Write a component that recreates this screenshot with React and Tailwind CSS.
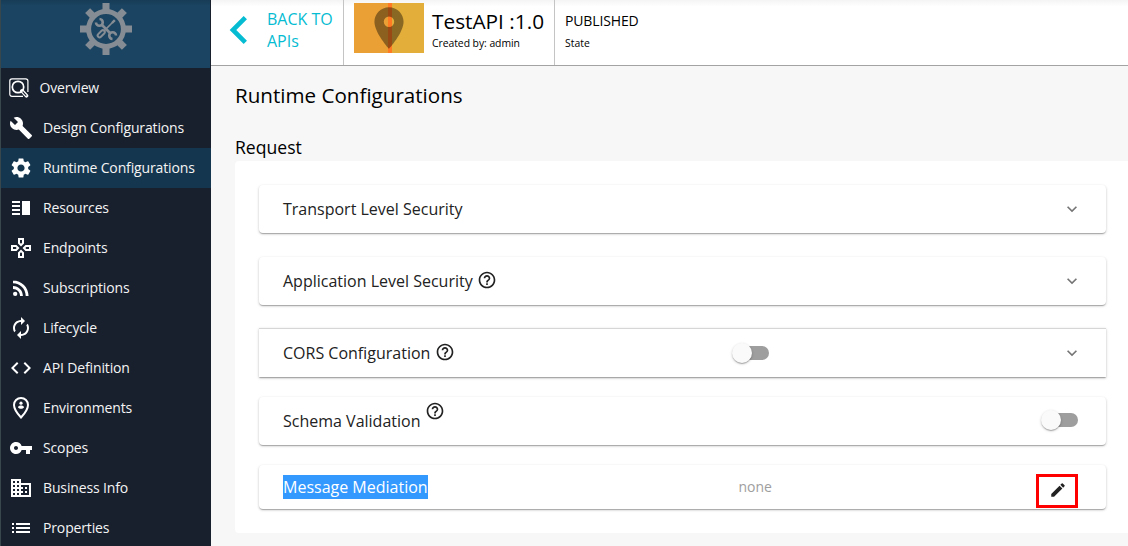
import React from "react";
import {
  MdBuild,
  MdSettings,
  MdVerticalSplit,
  MdOutlineGames,
  MdRssFeed,
  MdAutorenew,
  MdCode,
  MdVpnKey,
  MdBusiness,
  MdList,
  MdEdit,
  MdHelpOutline,
  MdExpandMore,
  MdKeyboardArrowLeft,
  MdPlace,
} from "react-icons/md";

const items = [
  { label: "Design Configurations", Icon: MdBuild },
  { label: "Runtime Configurations", Icon: MdSettings, active: true },
  { label: "Resources", Icon: MdVerticalSplit },
  { label: "Endpoints", Icon: MdOutlineGames },
  { label: "Subscriptions", Icon: MdRssFeed },
  { label: "Lifecycle", Icon: MdAutorenew },
  { label: "API Definition", Icon: MdCode },
  { label: "Environments", Icon: PersonPin },
  { label: "Scopes", Icon: MdVpnKey },
  { label: "Business Info", Icon: MdBusiness },
  { label: "Properties", Icon: MdList },
];

function PersonPin({ className }) {
  return (
    <svg viewBox="0 0 24 24" className={className} fill="currentColor">
      <path
        d="M12 2C8.100 2 5 5.100 5 8.900 5 12.500 8.500 17.700 12 21.500c3.500-3.800 7-9 7-12.600C19 5.100 15.900 2 12 2z"
        fill="none"
        stroke="currentColor"
        strokeWidth="2"
      />
      <circle cx="12" cy="7.200" r="1.600" />
      <path d="M9 11.400c0-1.300 1.700-1.900 3-1.900s3 .6 3 1.900c-.7.900-1.800 1.300-3 1.300s-2.300-.4-3-1.300z" />
    </svg>
  );
}

function GearLogo() {
  return (
    <svg width="52" height="52" viewBox="0 0 52 52" className="text-[#858c94]">
      <g fill="currentColor">
        {[0, 45, 90, 135].map((a) => (
          <g key={a} transform={`rotate(${a} 26 26)`}>
            <rect x="22.5" y="0" width="7" height="9" />
            <rect x="22.5" y="43" width="7" height="9" />
          </g>
        ))}
      </g>
      <circle cx="26" cy="26" r="17.4" fill="none" stroke="currentColor" strokeWidth="5" />
      <g transform="rotate(-45 26 26)" fill="none" stroke="currentColor">
        <path d="M26 20v12" strokeWidth="2.6" />
        <path d="M23.500 14.300a3.400 3.400 0 1 0 5 0M23.500 37.700a3.400 3.400 0 1 1 5 0" strokeWidth="2.600" />
      </g>
      <g transform="rotate(45 26 26)" stroke="currentColor">
        <path d="M26 14v14" strokeWidth="1.6" />
        <path d="M26 13.500v4" strokeWidth="2.400" />
        <rect x="24.100" y="28.500" width="3.800" height="8.500" rx="1.900" fill="none" strokeWidth="2" />
      </g>
    </svg>
  );
}

function OverviewIcon() {
  return (
    <svg width="20" height="20" viewBox="0 0 20 20" fill="none" stroke="#fff">
      <path d="M14 18.400H3A2.200 2.200 0 0 1 .8 16.200V3A2.200 2.200 0 0 1 3 .8h13.700a2.200 2.200 0 0 1 2.200 2.200V14" strokeWidth="1.200" />
      <circle cx="9" cy="9" r="5.700" strokeWidth="1.700" />
      <path d="M12.900 12.800l4.600 5" strokeWidth="3.600" strokeLinecap="round" />
      <path d="M13.600 13.600l3.700 4" stroke="#18202e" strokeWidth="1.200" />
    </svg>
  );
}

function Card({ className, children }) {
  return (
    <div
      className={`flex items-center bg-white pl-6 shadow-[0_1px_3px_rgba(0,0,0,0.2),0_1px_1px_rgba(0,0,0,0.14),0_2px_1px_-1px_rgba(0,0,0,0.12)] ${className}`}
    >
      {children}
    </div>
  );
}

function Toggle() {
  return (
    <span className="flex h-[14px] w-[34px] items-center rounded-full bg-[#9e9e9e]">
      <span className="-ml-[3px] size-5 shrink-0 rounded-full bg-[#fafafa] shadow-[0_1px_3px_rgba(0,0,0,0.2),0_1px_1px_rgba(0,0,0,0.14),0_2px_1px_-1px_rgba(0,0,0,0.12)]" />
    </span>
  );
}

function Chevron() {
  return <MdExpandMore className="mr-[24.5px] ml-auto size-5 text-[#757575]" />;
}

function Help({ className }) {
  return <MdHelpOutline className={`size-5 shrink-0 text-[#222] ${className}`} />;
}

export default function App() {
  return (
    <div className="flex h-[546px] w-[1128px] overflow-hidden bg-[#f7f7f7] font-['Open_Sans','Noto_Sans',sans-serif] text-black">
      <aside className="w-[211px] shrink-0 border-l border-[#38474b] bg-[#18202e]">
        <div className="mr-px flex h-[68px] justify-center bg-gradient-to-b from-[#173c56] to-[#1a4461] to-[8%] pt-[3px]">
          <GearLogo />
        </div>
        <nav className="text-sm tracking-[-0.14px] text-[#f4f4f4]">
          <a className="flex h-10 items-center gap-[10.5px] pl-2">
            <OverviewIcon />
            Overview
          </a>
          {items.map(({ label, Icon, active }) => (
            <a
              key={label}
              className={`flex h-10 items-center gap-[10px] pl-2 whitespace-nowrap ${active ? "bg-[#14374f]" : ""}`}
            >
              <Icon className="size-6 text-white" />
              {label}
            </a>
          ))}
        </nav>
      </aside>

      <main className="min-w-0 flex-1">
        <header className="flex h-[66px] border-b border-[#a3a3a3] bg-gradient-to-b from-[#f4f4f4] to-white to-[10%]">
          <a className="flex w-[133px] shrink-0 border-r border-[#c4c4c4] pt-[2px] text-[#05bcd2]">
            <MdKeyboardArrowLeft className="size-14 shrink-0" />
            <span className="pt-[6px] text-base leading-[22px]">BACK TO APIs</span>
          </a>
          <div className="flex w-[211px] shrink-0 border-r border-[#c4c4c4] pt-[3px] pl-[10px]">
            <div className="flex h-[50px] w-[70px] shrink-0 justify-center bg-[linear-gradient(90deg,#eaa035_34px,#ff7a22_34px,#ff7a22_38px,#e3ae3a_38px)]">
              <MdPlace className="size-[50px] text-black/40" />
            </div>
            <div className="pl-2 whitespace-nowrap">
              <div className="pt-[3px] pb-px text-[20.8px] leading-[30px]">TestAPI :1.0</div>
              <div className="text-[10.4px] leading-3 tracking-[-0.05px]">Created by: admin</div>
            </div>
          </div>
          <div className="pl-[10px]">
            <div className="pt-[10px] text-sm leading-[22px] tracking-[-0.14px]">PUBLISHED</div>
            <div className="pt-[5px] text-[10.4px] leading-3">State</div>
          </div>
        </header>

        <div className="pl-6">
          <h1 className="pt-[13px] pb-px text-[20.6px] leading-8">Runtime Configurations</h1>
          <h2 className="pt-[21px] text-[17.6px] leading-7">Request</h2>
          <section className="flex h-[372px] flex-col rounded-l bg-white pt-6 pr-[22px] pl-6 text-base text-[#222]">
            <Card className="h-12 rounded">
              Transport Level Security
              <Chevron />
            </Card>
            <Card className="mt-6 h-12 rounded">
              Application Level Security
              <Help className="mb-[3px] ml-1" />
              <Chevron />
            </Card>
            <Card className="mt-[23px] h-[49px] border-t border-[#d6d6d6]">
              <span className="flex w-[452px] items-center">
                CORS Configuration
                <Help className="mb-[3px] ml-[5px]" />
              </span>
              <Toggle />
              <Chevron />
            </Card>
            <Card className="mt-5 h-12 rounded">
              Schema Validation
              <Help className="mb-5 ml-[5px]" />
              <span className="mr-7 mb-[2px] ml-auto">
                <Toggle />
              </span>
            </Card>
            <Card className="mt-5 h-11 rounded">
              <span className="w-[455.5px]">
                <span className="bg-[#3399ff] py-px text-white">Message Mediation</span>
              </span>
              <span className="text-sm text-[#9e9e9e]">none</span>
              <span className="mt-[7px] mr-7 ml-auto flex h-[34px] w-[42px] items-center justify-center border-[3px] border-[#ff0000]">
                <MdEdit className="mb-[2px] ml-px size-[18px] text-[#222]" />
              </span>
            </Card>
          </section>
        </div>
      </main>
    </div>
  );
}
